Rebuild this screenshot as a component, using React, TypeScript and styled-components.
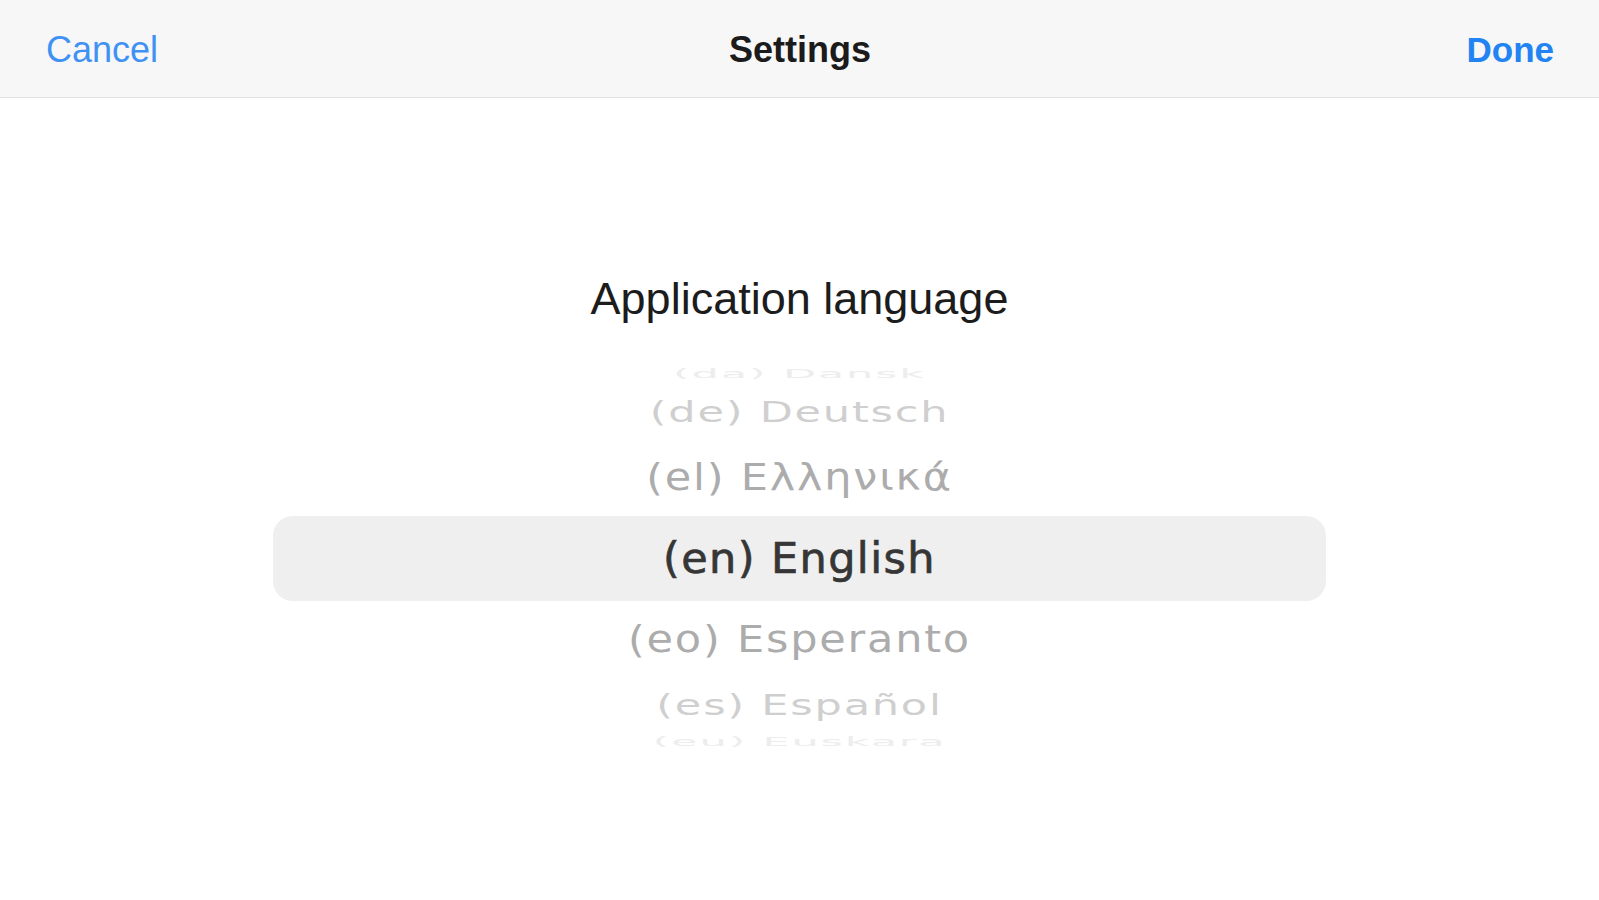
import styled, { createGlobalStyle } from "styled-components";

type Row = { label: string; height: number; scale: number; tone: string; selected?: boolean };

const rows: Row[] = [
  { label: "(da) Dansk", height: 21, scale: 0.27, tone: "#ededed" },
  { label: "(de) Deutsch", height: 54, scale: 0.64, tone: "#cfcfcf" },
  { label: "(el) Ελληνικά", height: 77, scale: 0.86, tone: "#acacac" },
  { label: "(en) English", height: 85, scale: 1, tone: "#363636", selected: true },
  { label: "(eo) Esperanto", height: 77, scale: 0.86, tone: "#acacac" },
  { label: "(es) Español", height: 54, scale: 0.64, tone: "#cfcfcf" },
  { label: "(eu) Euskara", height: 21, scale: 0.27, tone: "#ededed" },
];

export default function App() {
  return (
    <>
      <GlobalStyle />
      <Screen>
        <NavBar>
          <NavButton>Cancel</NavButton>
          <NavTitle>Settings</NavTitle>
          <NavButton $strong>Done</NavButton>
        </NavBar>
        <Content>
          <SectionTitle>Application language</SectionTitle>
          <Picker>
            {rows.map((row) => (
              <PickerRow key={row.label} $h={row.height} $selected={row.selected}>
                <PickerLabel $scale={row.scale} $tone={row.tone} $selected={row.selected}>
                  {row.label}
                </PickerLabel>
              </PickerRow>
            ))}
          </Picker>
        </Content>
      </Screen>
    </>
  );
}

const GlobalStyle = createGlobalStyle`
  html, body {
    margin: 0;
    padding: 0;
    background: #ffffff;
  }
  body {
    font-family: "Liberation Sans", Arial, sans-serif;
  }
`;

const Screen = styled.div`
  width: 1599px;
  height: 900px;
  display: flex;
  flex-direction: column;
  background: #ffffff;
  overflow: hidden;
`;

const NavBar = styled.header`
  height: 97px;
  display: grid;
  grid-template-columns: 1fr auto 1fr;
  align-items: center;
  padding: 0 45px 0 46px;
  background: #f7f7f7;
  border-bottom: 1px solid #e2e2e2;
  & > :last-child {
    justify-self: end;
  }
`;

const NavButton = styled.span<{ $strong?: boolean }>`
  font-size: ${(p) => (p.$strong ? 35 : 36)}px;
  font-weight: ${(p) => (p.$strong ? 700 : 400)};
  color: ${(p) => (p.$strong ? "#2283f3" : "#3f92f3")};
  padding-top: 2px;
`;

const NavTitle = styled.span`
  font-size: 36px;
  font-weight: 700;
  color: #1b1b1b;
  padding-top: 2px;
`;

const Content = styled.main`
  display: flex;
  flex-direction: column;
  align-items: center;
  padding-top: 174px;
`;

const SectionTitle = styled.h1`
  margin: 0;
  font-size: 45px;
  line-height: 54px;
  font-weight: 400;
  color: #1c1c1c;
`;

const Picker = styled.div`
  margin-top: 38px;
  width: 1053px;
  display: flex;
  flex-direction: column;
`;

const PickerRow = styled.div<{ $h: number; $selected?: boolean }>`
  height: ${(p) => p.$h}px;
  display: flex;
  align-items: center;
  justify-content: center;
  overflow: hidden;
  border-radius: 20px;
  background: ${(p) => (p.$selected ? "#efefef" : "transparent")};
`;

const PickerLabel = styled.span<{ $scale: number; $tone: string; $selected?: boolean }>`
  font-family: "DejaVu Sans", sans-serif;
  font-size: 43px;
  letter-spacing: ${(p) => (p.$selected ? 1.4 : 1.8)}px;
  line-height: 1;
  white-space: nowrap;
  color: ${(p) => p.$tone};
  -webkit-text-stroke: ${(p) => (p.$selected ? "0.7px" : "0")} ${(p) => p.$tone};
  transform: scaleY(${(p) => p.$scale});
`;
